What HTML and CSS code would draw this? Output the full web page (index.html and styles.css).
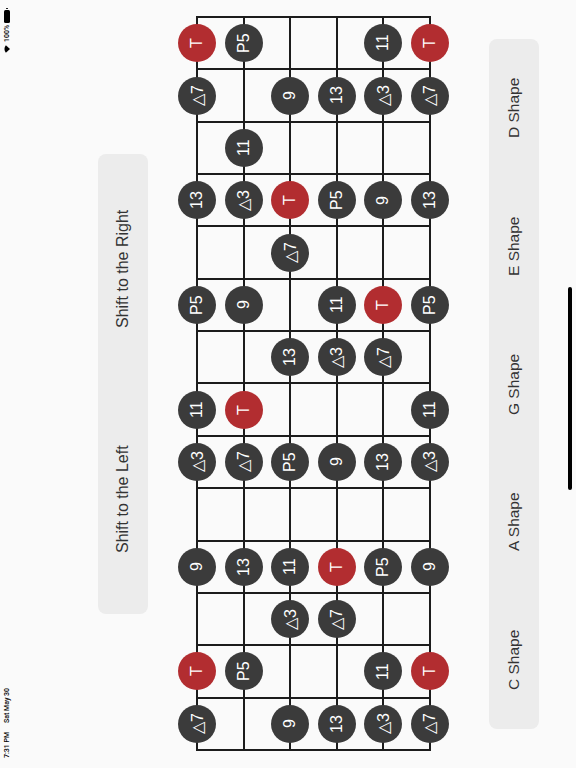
FILE: index.html
```html
<!DOCTYPE html>
<html>
<head>
<meta charset="utf-8">
<link rel="stylesheet" href="styles.css">
</head>
<body>
<div class="screen">
  <div class="status">
    <span class="time">7:31 PM</span>
    <span class="date">Sat May 30</span>
    <span class="spacer"></span>
    <svg class="wifi" width="6" height="8" viewBox="0 0 6 8"><path d="M0 4 L4.1 0.3 A5.4 5.4 0 0 1 4.1 7.7 Z" fill="#000"/></svg>
    <span class="pct">100%</span>
    <span class="battery"><span class="cell"></span><span class="nub"></span></span>
  </div>

  <div class="shift">
    <div class="btn">Shift to the Left</div>
    <div class="btn">Shift to the Right</div>
  </div>

  <div class="board">
    <div class="frets">
      <div class="fret"></div><div class="fret"></div><div class="fret"></div><div class="fret"></div><div class="fret"></div><div class="fret"></div><div class="fret"></div>
      <div class="fret"></div><div class="fret"></div><div class="fret"></div><div class="fret"></div><div class="fret"></div><div class="fret"></div><div class="fret"></div>
    </div>
    <div class="strings">
      <div class="string"></div><div class="string"></div><div class="string"></div><div class="string"></div><div class="string"></div>
    </div>
    <div class="dots">
      <span class="d">△7</span><span></span><span class="d">9</span><span class="d">13</span><span class="d">△3</span><span class="d">△7</span>
      <span class="d r">T</span><span class="d">P5</span><span></span><span></span><span class="d">11</span><span class="d r">T</span>
      <span></span><span></span><span class="d">△3</span><span class="d">△7</span><span></span><span></span>
      <span class="d">9</span><span class="d">13</span><span class="d">11</span><span class="d r">T</span><span class="d">P5</span><span class="d">9</span>
      <span></span><span></span><span></span><span></span><span></span><span></span>
      <span class="d">△3</span><span class="d">△7</span><span class="d">P5</span><span class="d">9</span><span class="d">13</span><span class="d">△3</span>
      <span class="d">11</span><span class="d r">T</span><span></span><span></span><span></span><span class="d">11</span>
      <span></span><span></span><span class="d">13</span><span class="d">△3</span><span class="d">△7</span><span></span>
      <span class="d">P5</span><span class="d">9</span><span></span><span class="d">11</span><span class="d r">T</span><span class="d">P5</span>
      <span></span><span></span><span class="d">△7</span><span></span><span></span><span></span>
      <span class="d">13</span><span class="d">△3</span><span class="d r">T</span><span class="d">P5</span><span class="d">9</span><span class="d">13</span>
      <span></span><span class="d">11</span><span></span><span></span><span></span><span></span>
      <span class="d">△7</span><span></span><span class="d">9</span><span class="d">13</span><span class="d">△3</span><span class="d">△7</span>
      <span class="d r">T</span><span class="d">P5</span><span></span><span></span><span class="d">11</span><span class="d r">T</span>
    </div>
  </div>

  <div class="shapes">
    <div class="btn">C Shape</div>
    <div class="btn">A Shape</div>
    <div class="btn">G Shape</div>
    <div class="btn">E Shape</div>
    <div class="btn">D Shape</div>
  </div>

  <div class="home"></div>
</div>
</body>
</html>
```
FILE: styles.css
```css
html, body {
  margin: 0;
  padding: 0;
  overflow: hidden;
}
body {
  width: 576px;
  height: 768px;
  background: #fafafa;
  font-family: "Liberation Sans", Arial, sans-serif;
}
/* Landscape app shown on a portrait capture: lay out sideways, then turn. */
.screen {
  width: 576px;
  height: 768px;
  writing-mode: vertical-rl;
  text-orientation: sideways;
  transform: rotate(180deg);
  display: flex;
  flex-direction: column;
  background: #fafafa;
}
.status {
  block-size: 14px;
  display: flex;
  align-items: center;
  padding-inline: 10px 8px;
  font-family: Roboto, "Liberation Sans", sans-serif;
  font-size: 7px;
  font-weight: 500;
  color: #000;
}
.date { margin-inline-start: 9px; }
.spacer { flex: 1; }
.wifi { margin-inline-end: 3px; }
.pct { margin-inline-end: 2px; }
.battery {
  display: flex;
  align-items: center;
}
.cell {
  inline-size: 13px;
  block-size: 6px;
  background: #000;
  border-radius: 1.5px;
}
.nub {
  inline-size: 1.5px;
  block-size: 2.5px;
  margin-inline-start: 0.5px;
  background: #000;
  border-radius: 1px;
}
.shift {
  margin-block-start: 84px;
  margin-inline-start: 154px;
  inline-size: 460px;
  block-size: 50px;
  display: flex;
  background: #ececec;
  border-radius: 8px;
}
.btn {
  flex: 1;
  display: flex;
  align-items: center;
  justify-content: center;
  color: #333;
  font-size: 16px;
}
.board {
  position: relative;
  margin-block-start: 48px;
  margin-inline-start: 17px;
  inline-size: 735px;
  block-size: 235px;
}
.frets {
  display: flex;
  box-sizing: border-box;
  inline-size: 735px;
  block-size: 235px;
  border-inline-end: 2px solid #1c1c1c;
}
.fret {
  flex: 1;
  border-inline-start: 2px solid #1c1c1c;
}
.strings {
  position: absolute;
  inset: 0;
  display: flex;
  flex-direction: column;
  box-sizing: border-box;
  border-block-end: 2px solid #1c1c1c;
}
.string {
  flex: 1;
  border-block-start: 2px solid #1c1c1c;
}
.dots {
  position: absolute;
  inset-inline-start: 1px;
  inset-block-start: -22.3px;
  inline-size: 733px;
  block-size: 279.6px;
  display: grid;
  grid-template-columns: repeat(14, 1fr);
  grid-template-rows: repeat(6, 1fr);
  grid-auto-flow: column;
  place-items: center;
}
.d {
  inline-size: 38px;
  block-size: 38px;
  border-radius: 50%;
  background: #3b3b3b;
  color: #fff;
  font-size: 16px;
  display: flex;
  align-items: center;
  justify-content: center;
}
.d.r { background: #b22d30; }
.shapes {
  margin-block-start: 58px;
  margin-inline-start: 39px;
  inline-size: 690px;
  block-size: 50px;
  display: flex;
  background: #ececec;
  border-radius: 8px;
}
.shapes .btn { font-size: 15.5px; }
.home {
  margin-block-start: 29px;
  margin-inline-start: 278px;
  inline-size: 203px;
  block-size: 4px;
  background: #000;
  border-radius: 2px;
}
```
